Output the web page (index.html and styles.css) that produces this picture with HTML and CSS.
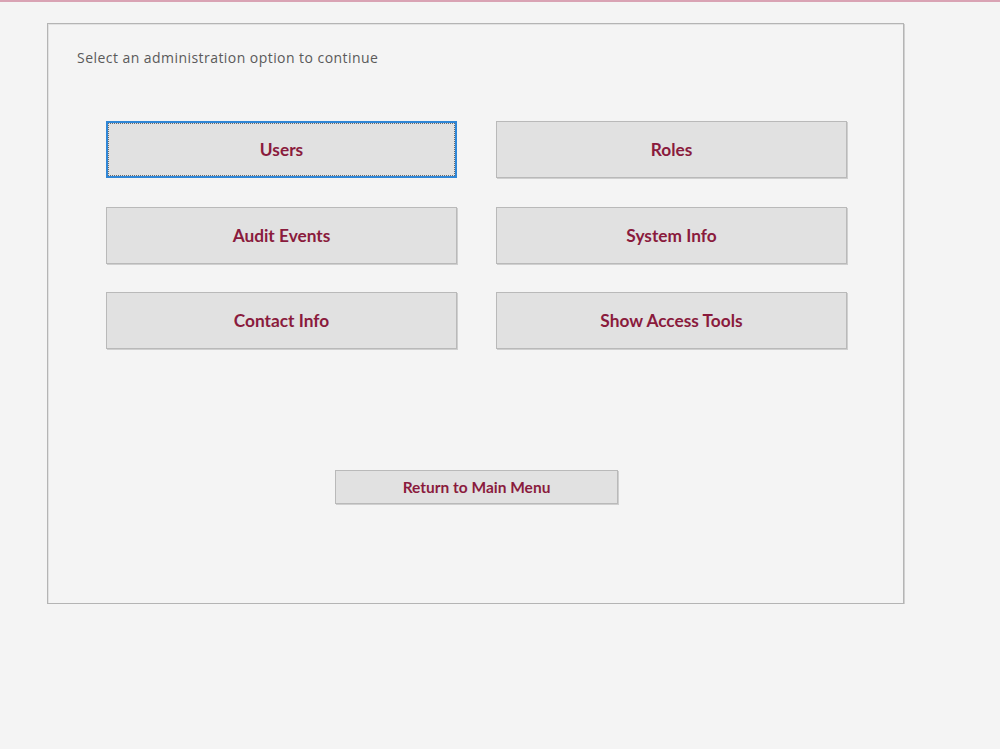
FILE: index.html
```html
<!DOCTYPE html>
<html>
<head>
<meta charset="utf-8">
<link rel="stylesheet" href="styles.css">
</head>
<body>
<div class="topline"></div>
<div class="panel">
  <div class="label">Select an administration option to continue</div>
  <div class="content">
    <div class="grid">
      <button class="btn focused">Users</button>
      <button class="btn">Roles</button>
      <button class="btn">Audit Events</button>
      <button class="btn">System Info</button>
      <button class="btn">Contact Info</button>
      <button class="btn">Show Access Tools</button>
    </div>
    <div class="return-row">
      <button class="btn small">Return to Main Menu</button>
    </div>
  </div>
</div>
</body>
</html>
```
FILE: styles.css
```css
html, body {
  margin: 0;
  padding: 0;
  background: #f4f4f4;
  font-family: Lato, "Open Sans", "Liberation Sans", sans-serif;
}
.topline {
  height: 2px;
  background: #d9a3b4;
}
.panel {
  box-sizing: border-box;
  margin: 21px 0 0 47px;
  width: 857px;
  height: 581px;
  border: 1px solid #b4b4b4;
  box-shadow: inset 1px 1px 0 #e2e2e2, 1px 1px 0 #d0d0d0;
  padding: 26px 0 0 29px;
}
.label {
  font-family: "Open Sans", Lato, sans-serif;
  font-size: 14px;
  letter-spacing: 0.45px;
  line-height: 16px;
  color: #5a5a5a;
}
.content {
  width: 741px;
  margin: 55px 0 0 29px;
}
.grid {
  display: grid;
  grid-template-columns: 351px 351px;
  grid-auto-rows: 57px;
  column-gap: 39px;
  row-gap: 28.5px;
}
.btn {
  box-sizing: border-box;
  background: #e1e1e1;
  border: 1px solid #b9b9b9;
  box-shadow: 1px 1px 0 #cfcfcf;
  color: #8a1b3d;
  font-family: Lato, "Open Sans", "Liberation Sans", sans-serif;
  font-weight: bold;
  font-size: 17.3px;
  padding: 0;
  margin: 0;
  cursor: default;
}
.btn.focused {
  border: 2px solid #2f86d6;
  outline: 1px dotted #6a6a6a;
  outline-offset: -3px;
  box-shadow: none;
}
.return-row {
  display: flex;
  justify-content: center;
  margin-top: 121px;
}
.btn.small {
  width: 283px;
  height: 34px;
  font-size: 15.5px;
}
```
